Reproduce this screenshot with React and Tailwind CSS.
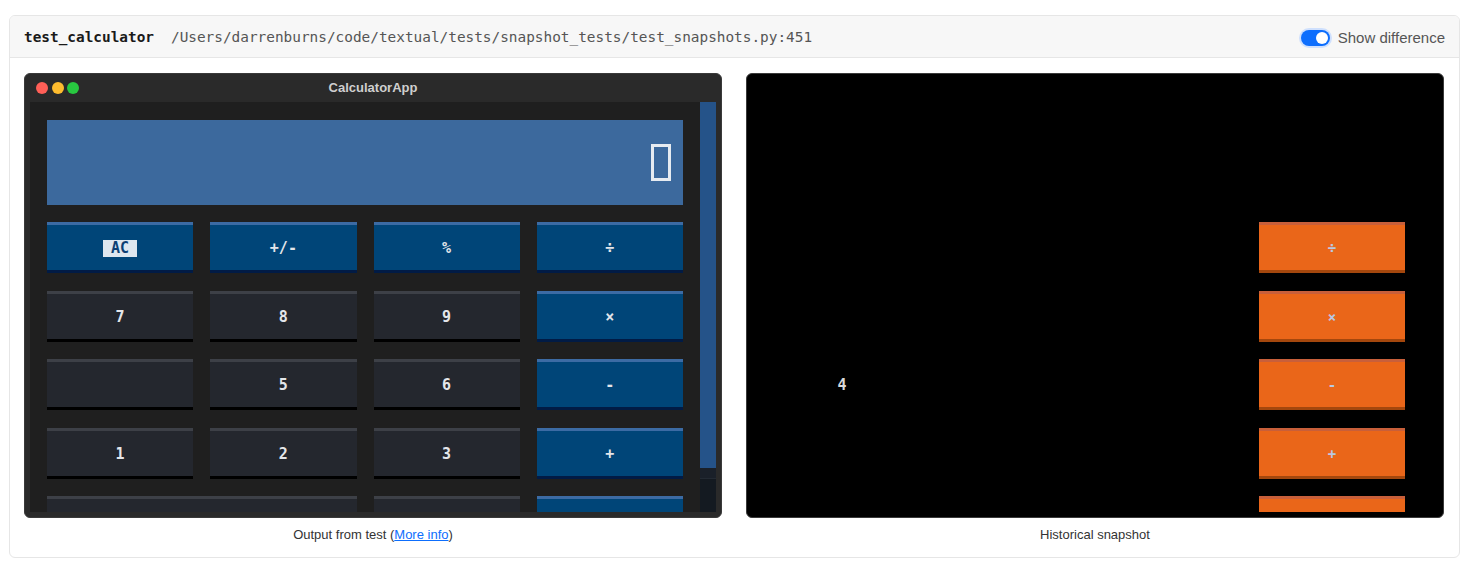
import React from 'react'

// Snapshot report: one test, output vs historical snapshot

const ROWS = [
  [{ t: 'AC', k: 'blue', ac: true }, { t: '+/-', k: 'blue' }, { t: '%', k: 'blue' }, { t: '÷', k: 'blue' }],
  [{ t: '7', k: 'dark' }, { t: '8', k: 'dark' }, { t: '9', k: 'dark' }, { t: '×', k: 'blue' }],
  [{ t: '', k: 'dark' }, { t: '5', k: 'dark' }, { t: '6', k: 'dark' }, { t: '-', k: 'blue' }],
  [{ t: '1', k: 'dark' }, { t: '2', k: 'dark' }, { t: '3', k: 'dark' }, { t: '+', k: 'blue' }],
]

const mono = "font-['DejaVu_Sans_Mono',monospace]"

function CalcButton({ b }) {
  const blue = b.k === 'blue'
  return (
    <div
      className={`h-[51px] flex items-center justify-center pt-[2px] border-t-[3px] border-b-[3px] ${mono} font-bold text-[15px] text-[#e4e6ea] ${
        blue ? 'bg-[#004578] border-t-[#3c6ba4] border-b-[#011b45]' : 'bg-[#24272e] border-t-[#3d4047] border-b-black'
      }`}
    >
      {b.ac ? (
        <span className="bg-[#dde6ef] text-[#0b3f74] px-[8px] leading-[17px]">AC</span>
      ) : (
        b.t
      )}
    </div>
  )
}

function DiffButton({ b, col, row }) {
  if (col === 3) {
    return (
      <div className={`h-[51px] flex items-center justify-center pt-[2px] bg-[#ea6619] border-t-[3px] border-b-[3px] border-t-[#c85f3a] border-b-[#a4470d] ${mono} text-[14px] font-bold text-[#b9c8e2]`}>
        {b.t}
      </div>
    )
  }
  return (
    <div className={`h-[51px] flex items-center justify-center pt-[2px] ${mono} font-bold text-[15px] text-[#d8d8d8]`}>
      {row === 2 && col === 0 ? '4' : ''}
    </div>
  )
}

function CalculatorWindow() {
  return (
    <div className="h-[445px] rounded-[6px] bg-[#2a2a2a] border border-[#3a3a3a] flex flex-col overflow-hidden">
      <div className="h-[28px] shrink-0 relative flex items-center justify-center">
        <div className="absolute left-[11px] top-[8px] flex gap-[3.5px]">
          <span className="w-[12px] h-[12px] rounded-full bg-[#ff5f57]" />
          <span className="w-[12px] h-[12px] rounded-full bg-[#febc2e]" />
          <span className="w-[12px] h-[12px] rounded-full bg-[#28c840]" />
        </div>
        <span className="text-[13px] font-bold text-[#cfcfcf]">CalculatorApp</span>
      </div>
      <div className="flex-1 mx-[5px] mb-[5px] bg-[#1f1f1f] flex overflow-hidden">
        <div className="flex-1 px-[17px] pt-[18px] flex flex-col gap-[17px] overflow-hidden">
          <div className="h-[85px] shrink-0 bg-[#3c699d] flex items-center justify-end pr-[12px]">
            <div className="w-[20px] h-[37px] border-[3px] border-[#e6ebf1]" />
          </div>
          <div className="grid grid-cols-4 gap-x-[17px] gap-y-[17.5px]">
            {ROWS.flat().map((b, i) => (
              <CalcButton key={i} b={b} />
            ))}
            <div className="col-span-2 h-[51px] bg-[#24272e] border-t-[3px] border-t-[#3d4047]" />
            <div className="h-[51px] bg-[#24272e] border-t-[3px] border-t-[#3d4047]" />
            <div className="h-[51px] bg-[#004578] border-t-[3px] border-t-[#3c6ba4]" />
          </div>
        </div>
        <div className="w-[16px] shrink-0 bg-[#141a21] flex flex-col">
          <div className="h-[366px] bg-[#255389]" />
          <div className="h-[11px] bg-[#1a2029] border-b border-[#232a33]" />
        </div>
      </div>
    </div>
  )
}

function SnapshotWindow() {
  return (
    <div className="h-[445px] rounded-[6px] bg-black border border-[#3a3a3a] flex flex-col overflow-hidden">
      <div className="h-[28px] shrink-0" />
      <div className="flex-1 mx-[5px] mb-[5px] flex overflow-hidden">
        <div className="flex-1 px-[17px] pt-[18px] flex flex-col gap-[17px] overflow-hidden">
          <div className="h-[85px] shrink-0" />
          <div className="grid grid-cols-4 gap-x-[17px] gap-y-[17.5px]">
            {ROWS.map((row, r) =>
              row.map((b, c) => <DiffButton key={`${r}-${c}`} b={b} col={c} row={r} />)
            )}
            <div className="col-span-3 h-[51px]" />
            <div className="h-[51px] bg-[#ea6619] border-t-[3px] border-t-[#c85f3a]" />
          </div>
        </div>
        <div className="w-[16px] shrink-0" />
      </div>
    </div>
  )
}

export default function App() {
  return (
    <div className="w-[1469px] h-[571px] bg-white pt-[15px] pl-[9px] font-['Liberation_Sans',Arial,sans-serif]">
      <div className="w-[1451px] h-[543px] border border-[#e6e6e6] rounded-[6px] overflow-hidden">
        <div className="h-[42px] bg-[#f7f7f7] border-b border-[#e6e6e6] flex items-center pl-[14px] pr-[14px] pt-[3px]">
          <span className={`${mono} font-bold text-[14.4px] text-[#1a1a1a]`}>test_calculator</span>
          <span className={`ml-[17px] ${mono} text-[14.4px] text-[#555]`}>
            /Users/darrenburns/code/textual/tests/snapshot_tests/test_snapshots.py:451
          </span>
          <div className="ml-auto flex items-center gap-[6px]">
            <div className="w-[33px] h-[20px] rounded-full bg-[#cfe0fd] flex items-center justify-center">
              <div className="w-[29px] h-[16px] rounded-full bg-[#0d6efd] flex items-center justify-end pr-[2px]">
                <div className="w-[12px] h-[12px] rounded-full bg-white" />
              </div>
            </div>
            <span className="text-[15px] text-[#555]">Show difference</span>
          </div>
        </div>
        <div className="grid grid-cols-[698px_698px] gap-[24px] pl-[14px] pr-[14px] pt-[15px]">
          <div className="flex flex-col">
            <CalculatorWindow />
            <div className="text-center text-[13px] text-[#333] mt-[7px]">
              Output from test (<span className="text-[#0d6efd] underline">More info</span>)
            </div>
          </div>
          <div className="flex flex-col">
            <SnapshotWindow />
            <div className="text-center text-[13px] text-[#333] mt-[7px]">Historical snapshot</div>
          </div>
        </div>
      </div>
    </div>
  )
}
